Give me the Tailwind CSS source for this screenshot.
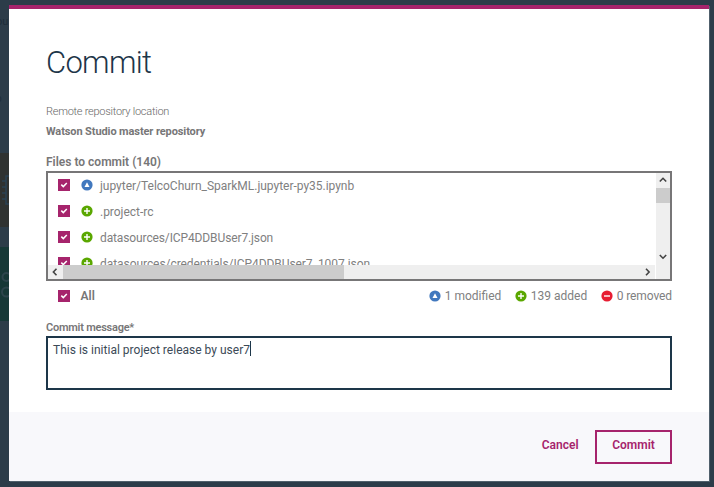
<!DOCTYPE html>
<html lang="en">
<head>
<meta charset="utf-8">
<title>Commit</title>
<script src="https://cdn.jsdelivr.net/npm/@tailwindcss/browser@4"></script>
</head>
<body class="relative h-[487px] w-[714px] overflow-hidden bg-[#2c3c49] font-['Roboto','Liberation_Sans',sans-serif]">
<svg width="0" height="0" class="absolute">
  <symbol id="check" viewBox="0 0 12 12"><rect width="12" height="12" fill="#a6246c"/><path d="M3.300 5.600 5.300 7.600 8.800 4" fill="none" stroke="#fff" stroke-width="1.500"/></symbol>
  <symbol id="mod" viewBox="0 0 12 12"><circle cx="6" cy="6" r="5.600" fill="#4178be"/><path d="M6 3.200 8.500 7.900H3.500Z" fill="#fff"/></symbol>
  <symbol id="add" viewBox="0 0 12 12"><circle cx="6" cy="6" r="5.600" fill="#5aa700"/><path d="M6 3v6M3 6h6" stroke="#fff" stroke-width="1.400"/></symbol>
  <symbol id="rem" viewBox="0 0 12 12"><circle cx="6" cy="6" r="5.600" fill="#e71d32"/><path d="M3 6h6" stroke="#fff" stroke-width="1.400"/></symbol>
</svg>
<!-- dimmed page behind the dialog -->
<svg class="absolute left-0 top-0" width="9" height="487" viewBox="0 0 9 487" aria-hidden="true">
  <rect y="153" width="9" height="74" fill="#2f3231"/>
  <path d="M9 176H6v28h3M2 181h4M2 187h4M2 193h4M2 199h4" fill="none" stroke="#2b4253" stroke-width="1.500"/>
  <rect y="247" width="9" height="74" fill="#163837"/>
  <g fill="none" stroke="#2c454c" stroke-width="2"><circle cx="6.500" cy="277" r="4"/><circle cx="6.500" cy="292" r="4.500"/></g>
  <text x="-4" y="25" font-size="11" fill="#1e2d39">ou</text>
  <text x="-4" y="102" font-size="10" fill="#1e2d39">o</text>
</svg>
<main class="absolute left-[9px] top-[5px] flex h-[476px] w-[700px] flex-col border-t-4 border-[#a6246c] bg-white shadow-[1px_1px_0_#50606c]">
  <section class="flex h-[403px] flex-col px-[37px] text-[#80807f]">
    <h1 class="mt-[33px] h-[42px] text-[31px] leading-[42px] font-light tracking-[-0.7px] text-[#1d3649]">Commit</h1>
    <p class="mt-[19px] h-[18px] text-[11px] leading-[18px] font-light tracking-[-0.26px] text-[#666]">Remote repository location</p>
    <p class="mt-px h-[18px] text-[11px] leading-[19px] font-bold tracking-[-0.1px] text-[#777677]">Watson Studio master repository</p>
    <p class="mt-[13px] h-[18px] text-[12px] leading-[18px] font-semibold text-[#777677]">Files to commit (140)</p>
    <div class="flex h-[110px] shrink-0 border-2 border-[#777677]">
      <div class="flex w-[608px] flex-col">
        <ul class="h-[92px] overflow-hidden text-[12px] tracking-[-0.02px]">
          <li class="-mt-px flex h-[26px] items-center pl-[10px]"><svg class="size-3"><use href="#check"/></svg><svg class="ml-[11px] size-3"><use href="#mod"/></svg><span class="ml-[7px] pt-px">jupyter/TelcoChurn_SparkML.jupyter-py35.ipynb</span></li>
          <li class="flex h-[26px] items-center pl-[10px]"><svg class="size-3"><use href="#check"/></svg><svg class="ml-[11px] size-3"><use href="#add"/></svg><span class="ml-[7px] pt-px">.project-rc</span></li>
          <li class="flex h-[26px] items-center pl-[10px] tracking-[-0.12px]"><svg class="size-3"><use href="#check"/></svg><svg class="ml-[11px] size-3"><use href="#add"/></svg><span class="ml-[7px] pt-px">datasources/ICP4DDBUser7.json</span></li>
          <li class="flex h-[26px] items-center pl-[10px] tracking-[-0.06px]"><svg class="size-3"><use href="#check"/></svg><svg class="ml-[11px] size-3"><use href="#add"/></svg><span class="ml-[7px] pt-px">datasources/credentials/ICP4DDBUser7_1007.json</span></li>
        </ul>
        <div class="flex h-[14px] w-[607px] items-center justify-between bg-[#efefef]">
          <svg class="h-[14px] w-[15px]"><path d="M8.500 3.800 5.400 7l3.100 3.200" fill="none" stroke="#444" stroke-width="1.600"/></svg>
          <div class="h-full w-[281px] bg-[#cccccc]"></div>
          <svg class="ml-auto h-[14px] w-[15px]"><path d="M6 3.800 9.100 7 6 10.200" fill="none" stroke="#444" stroke-width="1.600"/></svg>
        </div>
      </div>
      <div class="flex w-[14px] flex-col bg-[#efefef]">
        <svg class="h-[15px] w-[14px]"><path d="M3.800 8.500 7 5.300 10.200 8.500" fill="none" stroke="#444" stroke-width="1.600"/></svg>
        <div class="h-[15px] bg-[#cccccc]"></div>
        <svg class="mt-[46px] h-[15px] w-[14px]"><path d="M3.800 6 7 9.200 10.200 6" fill="none" stroke="#444" stroke-width="1.600"/></svg>
      </div>
    </div>
    <div class="flex h-[30px] items-center pl-[11.500px] text-[12px]">
      <svg class="size-3"><use href="#check"/></svg><b class="ml-[11px] font-semibold text-[#777677]">All</b>
      <div class="ml-auto flex items-center">
        <svg class="mr-[3.500px] size-3"><use href="#mod"/></svg><span>1 modified</span>
        <svg class="mr-[3.500px] ml-[14px] size-3"><use href="#add"/></svg><span>139 added</span>
        <svg class="mr-[3.500px] ml-[14px] size-3"><use href="#rem"/></svg><span class="tracking-[-0.100px]">0 removed</span>
      </div>
    </div>
    <label class="mt-[7px] h-[18px] text-[11px] leading-[19px] font-semibold tracking-[-0.24px] text-[#777677]">Commit message*</label>
    <div class="flex h-[54px] shrink-0 items-start border-2 border-[#1d3649] px-[5px] pt-[3px] text-[12px] leading-[18px] text-[#3c4a57]"><span class="tracking-[0.01px]">This is initial project release by user7</span><i class="h-[15px] w-px bg-[#1d3649]"></i></div>
  </section>
  <footer class="flex h-[69px] items-start justify-end bg-[#f8f8fb] pt-[18px] pr-[37px] text-[12px] font-semibold text-[#a6246c]">
    <button class="mr-[16.500px] h-[30px]">Cancel</button>
    <button class="h-[34px] w-[77px] border-2 border-[#a6246c] pb-[4px]">Commit</button>
  </footer>
</main>
</body>
</html>
